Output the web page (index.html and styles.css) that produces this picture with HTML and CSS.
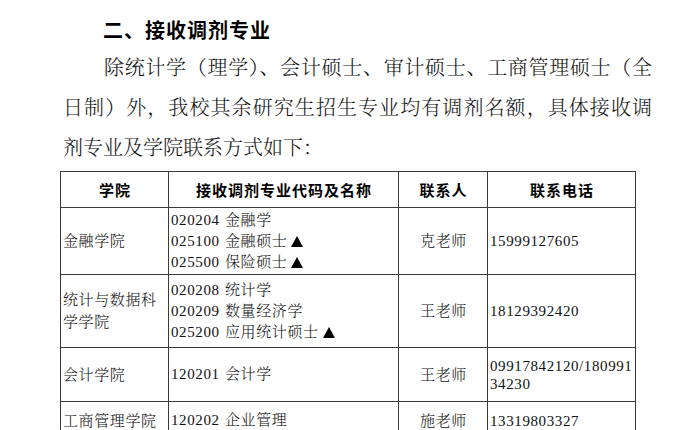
FILE: index.html
```html
<!DOCTYPE html>
<html lang="zh-CN">
<head>
<meta charset="utf-8">
<title>接收调剂专业</title>
<link rel="stylesheet" href="styles.css">
</head>
<body>
<div class="page">
  <h2 class="title">二、接收调剂专业</h2>
  <p class="para">
    <span class="line first">除统计学（理学）、会计硕士、审计硕士、工商管理硕士（全</span>
    <span class="line">日制）外，我校其余研究生招生专业均有调剂名额，具体接收调</span>
    <span class="line last">剂专业及学院联系方式如下：</span>
  </p>
  <table class="adj">
    <colgroup>
      <col class="c1"><col class="c2"><col class="c3"><col class="c4">
    </colgroup>
    <thead>
      <tr class="r-head">
        <th>学院</th>
        <th>接收调剂专业代码及名称</th>
        <th>联系人</th>
        <th>联系电话</th>
      </tr>
    </thead>
    <tbody>
      <tr class="r1">
        <td class="school">金融学院</td>
        <td class="majors">
          <div class="m"><span class="code">020204</span>金融学</div>
          <div class="m"><span class="code">025100</span>金融硕士<span class="tri" aria-label="▲"></span></div>
          <div class="m"><span class="code">025500</span>保险硕士<span class="tri" aria-label="▲"></span></div>
        </td>
        <td class="person">克老师</td>
        <td class="phone">15999127605</td>
      </tr>
      <tr class="r2">
        <td class="school">统计与数据科学学院</td>
        <td class="majors">
          <div class="m"><span class="code">020208</span>统计学</div>
          <div class="m"><span class="code">020209</span>数量经济学</div>
          <div class="m"><span class="code">025200</span>应用统计硕士<span class="tri" aria-label="▲"></span></div>
        </td>
        <td class="person">王老师</td>
        <td class="phone">18129392420</td>
      </tr>
      <tr class="r3">
        <td class="school">会计学院</td>
        <td class="majors">
          <div class="m"><span class="code">120201</span>会计学</div>
        </td>
        <td class="person">王老师</td>
        <td class="phone">09917842120/18099134230</td>
      </tr>
      <tr class="r4">
        <td class="school">工商管理学院</td>
        <td class="majors">
          <div class="m"><span class="code">120202</span>企业管理</div>
        </td>
        <td class="person">施老师</td>
        <td class="phone">13319803327</td>
      </tr>
    </tbody>
  </table>
</div>
</body>
</html>
```
FILE: styles.css
```css
html, body {
  margin: 0;
  padding: 0;
  background: #ffffff;
}
body {
  font-family: "Liberation Serif", "Noto Serif CJK SC", "Noto Sans CJK SC", serif;
  color: #111111;
}
.page {
  padding: 12px 0 0 60px;
}
.title {
  margin: 0 0 0 43px;
  font-family: "Noto Sans CJK SC", sans-serif;
  font-size: 20px;
  font-weight: 700;
  line-height: 36px;
  letter-spacing: 1px;
  color: #000000;
}
.para {
  margin: 0 0 0 3px;
  width: 589px;
  font-size: 20px;
  line-height: 40px;
  font-weight: 300;
}
.line {
  display: block;
  text-align: justify;
  text-align-last: justify;
}
.line.first {
  text-indent: 41px;
}
.line.last {
  text-align-last: left;
}
.adj {
  margin-top: 3px;
  border-collapse: collapse;
  table-layout: fixed;
  width: 575px;
  font-size: 15px;
  letter-spacing: 0.6px;
  line-height: 20px;
  font-weight: 300;
}
.c1 { width: 108px; }
.c2 { width: 230px; }
.c3 { width: 89px; }
.c4 { width: 148px; }
.adj th, .adj td {
  border: 1.5px solid #3a3a3a;
  padding: 0 1px 0 2px;
  vertical-align: middle;
  text-align: left;
}
.adj th {
  text-align: center;
  font-family: "Noto Sans CJK SC", sans-serif;
  font-weight: 700;
  letter-spacing: 1px;
  color: #000000;
}
.r-head { height: 36px; }
.r1 { height: 67px; }
.r2 { height: 73px; }
.r3 { height: 54px; }
.r4 { height: 38px; }
.school {
  line-height: 22px;
}
.majors .m {
  line-height: 21px;
  white-space: nowrap;
}
.code {
  display: inline-block;
  width: 54px;
}
.tri {
  display: inline-block;
  width: 0;
  height: 0;
  margin-left: 4px;
  border-left: 6px solid transparent;
  border-right: 6px solid transparent;
  border-bottom: 11px solid #000000;
  vertical-align: -1px;
}
.adj td.person {
  text-align: center;
}
.phone {
  word-break: break-all;
  line-height: 18px;
}
```
